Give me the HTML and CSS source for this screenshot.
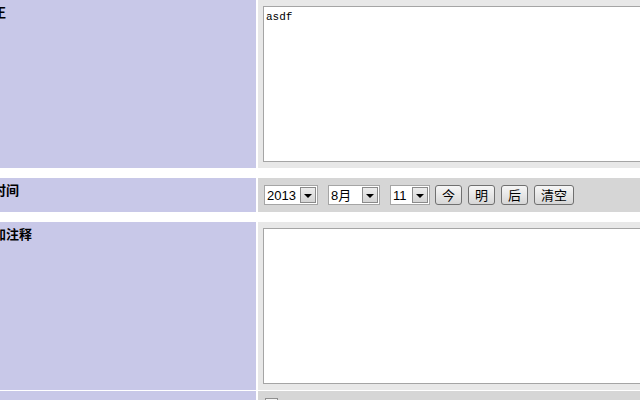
FILE: index.html
```html
<!DOCTYPE html>
<html lang="zh-CN">
<head>
    <meta charset="UTF-8">
    <title>发布内容</title>
    <link rel="stylesheet" href="styles.css">
</head>
<body>
    <div class="form">
        <div class="row">
            <div class="label">正</div>
            <div class="field">
                <textarea class="box">asdf</textarea>
            </div>
        </div>

        <div class="row alt spaced">
            <div class="label">时间</div>
            <div class="field tools">
                <span class="sel w-year">
                    <select><option>2013</option><option>2012</option></select>
                    <span class="arrow"></span>
                </span>
                <span class="sel w-month">
                    <select><option>8月</option><option>9月</option></select>
                    <span class="arrow"></span>
                </span>
                <span class="sel w-day">
                    <select><option>11</option><option>12</option></select>
                    <span class="arrow"></span>
                </span>
                <button class="btn">今</button>
                <button class="btn">明</button>
                <button class="btn">后</button>
                <button class="btn">清空</button>
            </div>
        </div>

        <div class="row spaced">
            <div class="label">加注释</div>
            <div class="field">
                <textarea class="box"></textarea>
            </div>
        </div>

        <div class="row alt thin">
            <div class="label low">置顶</div>
            <div class="field">
                <input type="checkbox" class="check">
            </div>
        </div>
    </div>
</body>
</html>
```

FILE: styles.css
```css
html, body {
    margin: 0;
    background: #fff;
    overflow: hidden;
}
.form {
    margin-left: -13px;
    width: 900px;
    font-family: "Noto Sans CJK SC", "Liberation Sans", sans-serif;
}
.row {
    display: flex;
    gap: 2px;
}
.spaced { margin-top: 10px; }
.thin { margin-top: 1px; }
.label {
    width: 263px;
    flex: none;
    background: #c8c8e8;
    padding: 3px 0 0 6px;
    font-size: 13px;
    font-weight: bold;
    line-height: 18px;
    color: #000;
}
.label.low { padding-top: 6px; }
.field {
    flex: 1;
    background: #e8e8e8;
    padding: 6px 5px;
}
.alt .field { background: #d6d6d6; }
.tools {
    display: flex;
    align-items: center;
    padding: 7px 5px 7px 6px;
}
.box {
    display: block;
    box-sizing: border-box;
    width: 420px;
    height: 156px;
    margin: 0;
    padding: 4px 2px;
    border: 1px solid #a5a5a5;
    background: #fff;
    font-family: "Liberation Mono", monospace;
    font-size: 11px;
    resize: none;
    outline: none;
}
.sel {
    display: inline-flex;
    align-items: center;
    box-sizing: border-box;
    height: 20px;
    border: 1px solid #a5a5a5;
    background: #fff;
    margin-right: 10px;
}
.sel select {
    appearance: none;
    -webkit-appearance: none;
    border: 0;
    background: transparent;
    padding: 0 0 0 2px;
    margin: 0;
    height: 18px;
    font-family: "Liberation Sans", Arial, "Noto Sans CJK SC", sans-serif;
    font-size: 13px;
    color: #000;
    outline: none;
}
.w-year select { width: 35px; }
.w-month select { width: 33px; }
.w-day select { width: 21px; }
.sel.w-day { margin-right: 5px; }
.arrow {
    display: flex;
    align-items: center;
    justify-content: center;
    box-sizing: border-box;
    width: 16px;
    height: 16px;
    margin: 0 1px 0 0;
    border: 1px solid #8a8a8a;
    background: linear-gradient(#ececec, #d4d4d4);
}
.arrow::after {
    content: "";
    border-left: 4px solid transparent;
    border-right: 4px solid transparent;
    border-top: 4px solid #000;
    margin-top: 1px;
}
.btn {
    box-sizing: border-box;
    height: 20px;
    min-width: 27px;
    padding: 0 6px;
    margin-right: 6px;
    border: 1px solid #707070;
    border-radius: 3px;
    background: linear-gradient(#f6f6f6, #e4e4e4 60%, #d6d6d6);
    font-family: "Noto Sans CJK SC", sans-serif;
    font-size: 13px;
    line-height: 16px;
    color: #000;
}
.check {
    display: block;
    appearance: none;
    -webkit-appearance: none;
    width: 13px;
    height: 13px;
    margin: 1px 0 0 2px;
    border: 1px solid #8f8f8f;
    background: #f4f4f4;
}
```
